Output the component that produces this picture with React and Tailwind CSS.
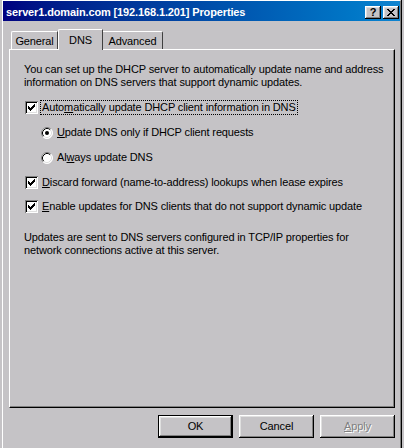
import React from "react";

const raised =
  "shadow-[inset_-1px_-1px_0_#000,inset_1px_1px_0_#fff,inset_-2px_-2px_0_#808080,inset_2px_2px_0_#dfdfdf]";
const sunken =
  "shadow-[inset_1px_1px_0_#808080,inset_-1px_-1px_0_#fff,inset_2px_2px_0_#000,inset_-2px_-2px_0_#dfdfdf]";

function CheckBox({ checked }) {
  const cols = [5, 6, 7, 6, 5, 4, 3];
  return (
    <span className={`relative block w-[13px] h-[13px] shrink-0 bg-white ${sunken}`}>
      {checked && (
        <svg width="13" height="13" className="absolute left-0 top-0" shapeRendering="crispEdges">
          {cols.map((y, i) => (
            <rect key={i} x={3 + i} y={y} width="1" height="3" fill="#000" />
          ))}
        </svg>
      )}
    </span>
  );
}

function Radio({ checked }) {
  return (
    <svg width="12" height="12" className="block shrink-0">
      <circle cx="6" cy="6" r="5.5" fill="#fff" />
      <path d="M2.11 9.89 A5.5 5.5 0 0 1 9.89 2.11" stroke="#808080" fill="none" />
      <path d="M9.89 2.11 A5.5 5.5 0 0 1 2.11 9.89" stroke="#fff" fill="none" />
      <path d="M2.82 9.18 A4.5 4.5 0 0 1 9.18 2.82" stroke="#000" fill="none" />
      <path d="M9.18 2.82 A4.5 4.5 0 0 1 2.82 9.18" stroke="#dfdfdf" fill="none" />
      {checked && <circle cx="6" cy="6" r="2" fill="#000" />}
    </svg>
  );
}

function Label({ children, focus }) {
  return (
    <span
      className={`ml-[2px] px-[1px] leading-[13px] border ${
        focus ? "border-dotted border-black" : "border-transparent"
      }`}
    >
      {children}
    </span>
  );
}

function Button({ children, def, disabled }) {
  return (
    <div
      className={`w-[75px] h-[23px] flex items-center justify-center ${
        def ? "border border-black" : ""
      }`}
    >
      <div className={`w-full h-full flex items-center justify-center ${raised}`}>
        <span
          className={
            disabled ? "text-[#808080] [text-shadow:1px_1px_0_#fff]" : "text-black"
          }
        >
          {children}
        </span>
      </div>
    </div>
  );
}

export default function App() {
  return (
    <div className="w-[404px] h-[448px] overflow-hidden bg-[#c5c3c6] text-[11px] tracking-[-0.13px] text-black font-['Liberation_Sans',Arial,sans-serif]">
      <div className="ml-[2px] w-[400px] h-[448px] border-r border-black">
        <div className="h-full border-l border-t border-white border-r border-r-[#808080]">
          {/* title bar */}
          <div className="h-[20px] pt-[3px] pl-[3px] pr-[1px] flex items-center bg-linear-to-r from-[#000080] to-[#1084d0]">
            <span className="font-bold text-white flex-1 whitespace-nowrap">
              server1.domain.com [192.168.1.201] Properties
            </span>
            <div className={`w-[16px] h-[13px] bg-[#c5c3c6] flex items-center justify-center font-bold text-[11px] leading-none ${raised}`}>
              ?
            </div>
            <div className={`ml-[2px] w-[16px] h-[13px] bg-[#c5c3c6] flex items-center justify-center ${raised}`}>
              <svg width="8" height="7" shapeRendering="crispEdges">
                <path d="M0 0 L2 0 L4 2.5 L6 0 L8 0 L5 3.5 L8 7 L6 7 L4 4.5 L2 7 L0 7 L3 3.5 Z" fill="#000" />
              </svg>
            </div>
          </div>

          {/* tabs */}
          <div className="mt-[8px] ml-[8px] h-[20px] flex items-end">
            <div className="w-[47px] h-[18px] border-l border-t border-white border-r border-r-[#404040] rounded-tl-[2px] flex items-center justify-center pt-[1px]">
              General
            </div>
            <div className="relative z-10 -mb-px w-[45px] h-[21px] bg-[#c5c3c6] border-l border-t border-white border-r border-r-[#404040] rounded-tl-[2px] flex items-start justify-center pt-[2px]">
              DNS
            </div>
            <div className="w-[60px] h-[18px] border-t border-white border-r border-r-[#404040] rounded-tr-[2px] flex items-center justify-center pt-[1px]">
              Advanced
            </div>
          </div>

          {/* panel */}
          <div className="ml-[6px] w-[386px] h-[359px] border-l border-t border-white border-r border-b border-r-black border-b-black">
            <div className="h-full border-r border-b border-r-[#808080] border-b-[#808080] pl-[14px] pt-[13px]">
              <p className="leading-[13px]">
                You can set up the DHCP server to automatically update name and address
                <br />
                information on DNS servers that support dynamic updates.
              </p>

              <div className="mt-[11px] h-[15px] flex items-center ml-[1px]">
                <CheckBox checked />
                <Label focus>
                  Auto<u>m</u>atically update DHCP client information in DNS
                </Label>
              </div>

              <div className="mt-[10px] h-[15px] flex items-center ml-[17px]">
                <Radio checked />
                <Label>
                  <u>U</u>pdate DNS only if DHCP client requests
                </Label>
              </div>

              <div className="mt-[10px] h-[15px] flex items-center ml-[17px]">
                <Radio />
                <Label>
                  Al<u>w</u>ays update DNS
                </Label>
              </div>

              <div className="mt-[10px] h-[15px] flex items-center ml-[1px]">
                <CheckBox checked />
                <Label>
                  <u>D</u>iscard forward (name-to-address) lookups when lease expires
                </Label>
              </div>

              <div className="mt-[9px] h-[15px] flex items-center ml-[1px]">
                <CheckBox checked />
                <Label>
                  <u>E</u>nable updates for DNS clients that do not support dynamic update
                </Label>
              </div>

              <p className="mt-[17px] leading-[13px]">
                Updates are sent to DNS servers configured in TCP/IP properties for
                <br />
                network connections active at this server.
              </p>
            </div>
          </div>

          {/* buttons */}
          <div className="mt-[7px] ml-[6px] w-[386px] flex justify-end gap-[6px]">
            <Button def>OK</Button>
            <Button>Cancel</Button>
            <Button disabled>
              <u>A</u>pply
            </Button>
          </div>
        </div>
      </div>
    </div>
  );
}
